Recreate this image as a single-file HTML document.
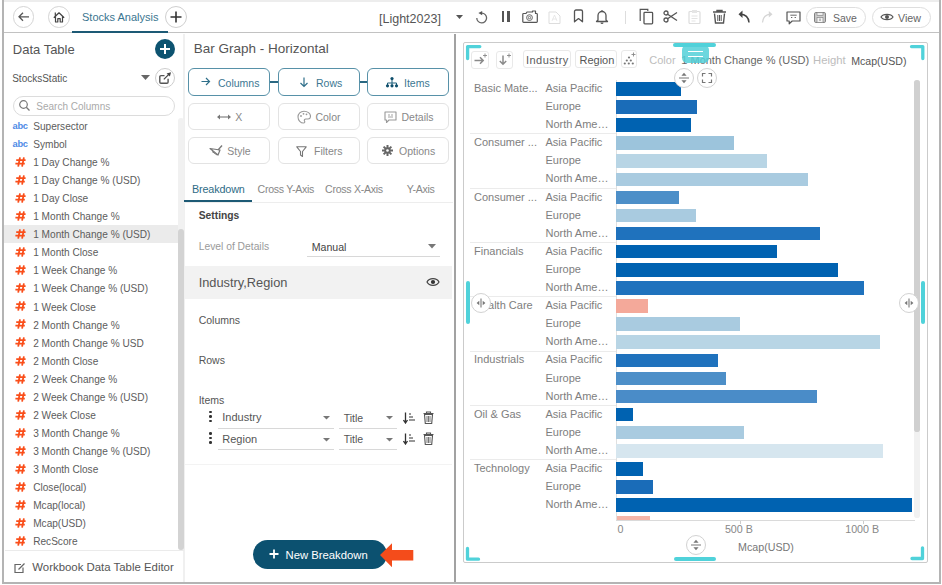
<!DOCTYPE html><html><head><meta charset="utf-8"><style>
html,body{margin:0;padding:0;}
body{width:942px;height:585px;position:relative;overflow:hidden;background:#fff;font-family:"Liberation Sans",sans-serif;}
.t{position:absolute;white-space:nowrap;}
.r{position:absolute;}
</style></head><body>
<div class="r" style="left:4px;top:0px;width:935px;height:2px;background:#ededed"></div>
<div class="r" style="left:2px;top:0px;width:2px;height:584px;background:#b4b4b4"></div>
<div class="r" style="left:939px;top:0px;width:2px;height:584px;background:#b4b4b4"></div>
<div class="r" style="left:2px;top:582px;width:939px;height:2px;background:#b4b4b4"></div>
<div class="r" style="left:4px;top:31.8px;width:935px;height:1.7px;background:#c2c2c2"></div>
<div class="r" style="left:12.8px;top:6.1px;width:21.5px;height:21.5px;border:1px solid #d4d4d4;border-radius:50%;box-sizing:border-box"></div>
<svg class="r" style="left:12.8px;top:6.1px;" width="21.5" height="21.5" viewBox="0 0 21.5 21.5"><path d="M6 10.8h10M10 6.8l-4 4 4 4" fill="none" stroke="#555" stroke-width="1.3"/></svg>
<div class="r" style="left:48px;top:6.1px;width:21.5px;height:21.5px;border:1px solid #d4d4d4;border-radius:50%;box-sizing:border-box"></div>
<svg class="r" style="left:48px;top:6.1px;" width="21.5" height="21.5" viewBox="0 0 21.5 21.5"><path d="M5.8 11.8L11 6.8l5.2 5M7.5 10.3v5.7h2.3v-3.3h2.4V16h2.3v-5.7M7.3 6.5v3.3" fill="none" stroke="#444" stroke-width="1.2" stroke-linejoin="round"/></svg>
<div class="t" style="left:82px;top:11.99px;font-size:11px;line-height:11px;color:#3a7590;font-weight:400;">Stocks Analysis</div>
<div class="r" style="left:72px;top:31px;width:96px;height:2px;background:#1d5a75"></div>
<div class="r" style="left:165px;top:5.5px;width:22px;height:22px;border:1px solid #cfcfcf;border-radius:50%;box-sizing:border-box"></div>
<svg class="r" style="left:165px;top:5.5px;" width="22" height="22" viewBox="0 0 22 22"><path d="M11 5.5v11M5.5 11h11" stroke="#333" stroke-width="1.6"/></svg>
<div class="t" style="left:379px;top:12.62px;font-size:12.5px;line-height:12.5px;color:#555;font-weight:400;">[Light2023]</div>
<svg class="r" style="left:456px;top:15px;" width="7" height="4" viewBox="0 0 7 4"><path d="M0 0h7L3.5 4z" fill="#555"/></svg>
<svg class="r" style="left:474.5px;top:10.5px;" width="13" height="13" viewBox="0 0 13 13"><path d="M6.8 2.1A4.9 4.9 0 1 1 1.8 6.9" fill="none" stroke="#666" stroke-width="1.3"/><path d="M3.4 2.1L7.2 0V4.3z" fill="#555"/></svg>
<div class="r" style="left:501.6px;top:11.2px;width:2.6px;height:10.4px;background:#555"></div>
<div class="r" style="left:507.1px;top:11.2px;width:2.6px;height:10.4px;background:#555"></div>
<svg class="r" style="left:522px;top:10px;" width="16" height="13" viewBox="0 0 16 13"><path d="M1.6 3.5H4l1-1.5h5.5V1h3v2.5h1a0.8 0.8 0 0 1 .8.8V11.5a.8.8 0 0 1-.8.8H1.6a.8.8 0 0 1-.8-.8V4.3a.8.8 0 0 1 .8-.8z" fill="none" stroke="#555" stroke-width="1.2" stroke-linejoin="round"/><circle cx="7.5" cy="7.6" r="2.9" fill="none" stroke="#666" stroke-width="1"/><circle cx="7.5" cy="7.6" r="1.2" fill="none" stroke="#666" stroke-width="0.9"/></svg>
<svg class="r" style="left:548px;top:11px;" width="13" height="13" viewBox="0 0 13 13"><path d="M1 1h7l4 4v7.5H1z" fill="none" stroke="#ddd" stroke-width="1"/><path d="M4 10l2.5-6 2.5 6M4.5 8h4" fill="none" stroke="#e3e3e3" stroke-width="0.8"/></svg>
<svg class="r" style="left:573px;top:9px;" width="11" height="14" viewBox="0 0 11 14"><path d="M1.5 12.8V2.5a1.5 1.5 0 0 1 1.5-1.5h5a1.5 1.5 0 0 1 1.5 1.5v10.3L5.5 9.6z" fill="none" stroke="#555" stroke-width="1.3" stroke-linejoin="round"/></svg>
<svg class="r" style="left:595px;top:9px;" width="14" height="15" viewBox="0 0 14 15"><path d="M3 11V6.5a4 4 0 0 1 8 0V11l1.5 1.5h-11z" fill="none" stroke="#555" stroke-width="1.3" stroke-linejoin="round"/><path d="M5.5 13.5a1.5 1.5 0 0 0 3 0" fill="#555"/><rect x="6.3" y="1.2" width="1.4" height="1.5" fill="#555"/></svg>
<div class="r" style="left:625px;top:11px;width:1px;height:13px;background:#ddd"></div>
<svg class="r" style="left:638px;top:8px;" width="16" height="17" viewBox="0 0 16 17"><path d="M2.2 13V1.3H9.8V3" fill="none" stroke="#555" stroke-width="1.2"/><rect x="6" y="4.4" width="8.6" height="11.4" rx="0.8" fill="none" stroke="#555" stroke-width="1.3"/></svg>
<svg class="r" style="left:663px;top:10px;" width="15" height="13" viewBox="0 0 15 13"><circle cx="3" cy="3" r="2" fill="none" stroke="#555" stroke-width="1.3"/><circle cx="3" cy="10" r="2" fill="none" stroke="#555" stroke-width="1.3"/><path d="M4.6 4.2L14 10.5M4.6 8.8L14 2.5" stroke="#555" stroke-width="1.3"/></svg>
<svg class="r" style="left:688px;top:9px;" width="13" height="15" viewBox="0 0 13 15"><rect x="1" y="2.5" width="11" height="12" rx="1" fill="none" stroke="#ddd" stroke-width="1.2"/><rect x="4" y="1" width="5" height="3" fill="#e5e5e5"/><path d="M3.5 7h6M3.5 9.5h6M3.5 12h4" stroke="#e3e3e3" stroke-width="1"/></svg>
<svg class="r" style="left:712px;top:9px;" width="15" height="15" viewBox="0 0 15 15"><path d="M1 3h13M5 3V1.5h5V3" fill="none" stroke="#555" stroke-width="1.4"/><path d="M2.5 4.5l1 9.5h8l1-9.5" fill="none" stroke="#555" stroke-width="1.4"/><path d="M5.8 6v6M7.5 6v6M9.2 6v6" stroke="#555" stroke-width="1"/></svg>
<svg class="r" style="left:738px;top:10px;" width="12" height="13" viewBox="0 0 12 13"><path d="M11 12.5C10.5 6 7 4.2 2 4.2" fill="none" stroke="#444" stroke-width="1.5"/><path d="M0.5 4.2L4.5 0.5V8z" fill="#444"/></svg>
<svg class="r" style="left:761px;top:10px;" width="12" height="13" viewBox="0 0 12 13"><path d="M1.5 12.5C2 6.5 5 4.5 9.5 4.2" fill="none" stroke="#d5d5d5" stroke-width="1.2"/><path d="M11.5 4.2L7.8 1V7.5z" fill="#d5d5d5"/></svg>
<svg class="r" style="left:785.5px;top:10.5px;" width="15" height="14" viewBox="0 0 15 14"><path d="M1 1h13v9H6.2L3.2 12.8V10H1z" fill="none" stroke="#555" stroke-width="1.2" stroke-linejoin="round"/><path d="M4.3 4.2h6.4" stroke="#777" stroke-width="1.1"/><path d="M5 6.5h1.3M8.6 6.5h1.3" stroke="#666" stroke-width="1.2"/></svg>
<div class="r" style="left:805.5px;top:6.5px;width:60.5px;height:21px;border:1px solid #dedede;border-radius:11px;box-sizing:border-box"></div>
<svg class="r" style="left:814px;top:12px;" width="12" height="11" viewBox="0 0 12 11"><rect x="0.6" y="0.6" width="10.8" height="9.8" rx="1" fill="#cfcfcf" stroke="#777" stroke-width="1"/><rect x="3" y="0.6" width="6" height="3" fill="#eee" stroke="#888" stroke-width="0.7"/><rect x="3" y="5.5" width="6" height="4.9" fill="#f4f4f4" stroke="#888" stroke-width="0.7"/><path d="M6 6.5v2.5" stroke="#777" stroke-width="0.9"/></svg>
<div class="t" style="left:833px;top:13.11px;font-size:10.5px;line-height:10.5px;color:#666;font-weight:400;">Save</div>
<div class="r" style="left:872px;top:6.5px;width:59px;height:21px;border:1px solid #dedede;border-radius:11px;box-sizing:border-box"></div>
<svg class="r" style="left:880px;top:12px;" width="14" height="10" viewBox="0 0 14 10"><path d="M1 5C3 1.5 11 1.5 13 5C11 8.5 3 8.5 1 5z" fill="none" stroke="#555" stroke-width="1.2"/><circle cx="7" cy="5" r="2" fill="#555"/></svg>
<div class="t" style="left:898px;top:12.94px;font-size:10.7px;line-height:10.7px;color:#666;font-weight:400;">View</div>
<div class="r" style="left:183px;top:34px;width:2px;height:548px;background:#f0f0f0"></div>
<div class="t" style="left:12.8px;top:43.19px;font-size:13px;line-height:13px;color:#555;font-weight:400;">Data Table</div>
<div class="r" style="left:154.8px;top:39px;width:20px;height:20px;background:#0d5370;border-radius:50%"></div>
<svg class="r" style="left:154.8px;top:39px;" width="20" height="20" viewBox="0 0 20 20"><path d="M10 5v10M5 10h10" stroke="#fff" stroke-width="2"/></svg>
<div class="t" style="left:12.2px;top:74.03px;font-size:10px;line-height:10px;color:#555;font-weight:400;">StocksStatic</div>
<svg class="r" style="left:141px;top:75px;" width="9" height="5" viewBox="0 0 9 5"><path d="M0 0h9L4.5 5z" fill="#666"/></svg>
<div class="r" style="left:154.5px;top:67.5px;width:20.5px;height:20.5px;border:1.2px solid #cdcdcd;border-radius:50%;box-sizing:border-box"></div>
<svg class="r" style="left:154.5px;top:67.5px;" width="20.5" height="20.5" viewBox="0 0 20.5 20.5"><path d="M9.5 7.6H6a1.2 1.2 0 0 0-1.2 1.2v5.3a1.2 1.2 0 0 0 1.2 1.2h5.9a1.2 1.2 0 0 0 1.2-1.2V10.8" fill="none" stroke="#555" stroke-width="1.4"/><path d="M8.8 11.4L14.8 5.4" stroke="#444" stroke-width="1.2"/><path d="M16 4.3L11.6 5.4 14.9 8.6z" fill="#444"/></svg>
<div class="r" style="left:12.8px;top:96px;width:162px;height:19.5px;border:1px solid #dcdcdc;border-radius:10px;box-sizing:border-box"></div>
<svg class="r" style="left:18px;top:99px;" width="13" height="13" viewBox="0 0 13 13"><circle cx="5.5" cy="5.5" r="3.8" fill="none" stroke="#777" stroke-width="1.2"/><path d="M8.3 8.3L11.5 11.5" stroke="#777" stroke-width="1.3"/></svg>
<div class="t" style="left:36.3px;top:101.93px;font-size:10px;line-height:10px;color:#aaa;font-weight:400;">Search Columns</div>
<div class="r" style="left:177.5px;top:118px;width:6.5px;height:432px;background:#f1f1f1;border-radius:3px"></div>
<div class="r" style="left:177.9px;top:228.7px;width:6px;height:321.3px;background:#d3d3d3;border-radius:3px"></div>
<div class="t" style="left:12.6px;top:121.93px;font-size:9.3px;line-height:9.3px;color:#4f8be6;font-weight:700;letter-spacing:-0.35px">abc</div>
<div class="t" style="left:33.2px;top:121.85px;font-size:10.1px;line-height:10.1px;color:#5c5c5c;font-weight:400;">Supersector</div>
<div class="t" style="left:12.6px;top:140.00px;font-size:9.3px;line-height:9.3px;color:#4f8be6;font-weight:700;letter-spacing:-0.35px">abc</div>
<div class="t" style="left:33.2px;top:139.92px;font-size:10.1px;line-height:10.1px;color:#5c5c5c;font-weight:400;">Symbol</div>
<svg class="r" style="left:14.5px;top:156.74px;" width="11" height="10" viewBox="0 0 11 10"><path d="M5 0.3L3.2 9.7M8.9 0.3L7.1 9.7M1.2 3.1H10.6M0.4 6.7H9.8" stroke="#fa4e1a" stroke-width="1.8"/></svg>
<div class="t" style="left:33.2px;top:157.99px;font-size:10.1px;line-height:10.1px;color:#5c5c5c;font-weight:400;">1 Day Change %</div>
<svg class="r" style="left:14.5px;top:174.81px;" width="11" height="10" viewBox="0 0 11 10"><path d="M5 0.3L3.2 9.7M8.9 0.3L7.1 9.7M1.2 3.1H10.6M0.4 6.7H9.8" stroke="#fa4e1a" stroke-width="1.8"/></svg>
<div class="t" style="left:33.2px;top:176.06px;font-size:10.1px;line-height:10.1px;color:#5c5c5c;font-weight:400;">1 Day Change % (USD)</div>
<svg class="r" style="left:14.5px;top:192.88px;" width="11" height="10" viewBox="0 0 11 10"><path d="M5 0.3L3.2 9.7M8.9 0.3L7.1 9.7M1.2 3.1H10.6M0.4 6.7H9.8" stroke="#fa4e1a" stroke-width="1.8"/></svg>
<div class="t" style="left:33.2px;top:194.13px;font-size:10.1px;line-height:10.1px;color:#5c5c5c;font-weight:400;">1 Day Close</div>
<svg class="r" style="left:14.5px;top:210.95px;" width="11" height="10" viewBox="0 0 11 10"><path d="M5 0.3L3.2 9.7M8.9 0.3L7.1 9.7M1.2 3.1H10.6M0.4 6.7H9.8" stroke="#fa4e1a" stroke-width="1.8"/></svg>
<div class="t" style="left:33.2px;top:212.20px;font-size:10.1px;line-height:10.1px;color:#5c5c5c;font-weight:400;">1 Month Change %</div>
<div class="r" style="left:4.3px;top:225.2px;width:173.4px;height:17.7px;background:#ebebeb"></div>
<svg class="r" style="left:14.5px;top:229.02px;" width="11" height="10" viewBox="0 0 11 10"><path d="M5 0.3L3.2 9.7M8.9 0.3L7.1 9.7M1.2 3.1H10.6M0.4 6.7H9.8" stroke="#fa4e1a" stroke-width="1.8"/></svg>
<div class="t" style="left:33.2px;top:230.27px;font-size:10.1px;line-height:10.1px;color:#5c5c5c;font-weight:400;">1 Month Change % (USD)</div>
<svg class="r" style="left:14.5px;top:247.09px;" width="11" height="10" viewBox="0 0 11 10"><path d="M5 0.3L3.2 9.7M8.9 0.3L7.1 9.7M1.2 3.1H10.6M0.4 6.7H9.8" stroke="#fa4e1a" stroke-width="1.8"/></svg>
<div class="t" style="left:33.2px;top:248.34px;font-size:10.1px;line-height:10.1px;color:#5c5c5c;font-weight:400;">1 Month Close</div>
<svg class="r" style="left:14.5px;top:265.16px;" width="11" height="10" viewBox="0 0 11 10"><path d="M5 0.3L3.2 9.7M8.9 0.3L7.1 9.7M1.2 3.1H10.6M0.4 6.7H9.8" stroke="#fa4e1a" stroke-width="1.8"/></svg>
<div class="t" style="left:33.2px;top:266.41px;font-size:10.1px;line-height:10.1px;color:#5c5c5c;font-weight:400;">1 Week Change %</div>
<svg class="r" style="left:14.5px;top:283.23px;" width="11" height="10" viewBox="0 0 11 10"><path d="M5 0.3L3.2 9.7M8.9 0.3L7.1 9.7M1.2 3.1H10.6M0.4 6.7H9.8" stroke="#fa4e1a" stroke-width="1.8"/></svg>
<div class="t" style="left:33.2px;top:284.48px;font-size:10.1px;line-height:10.1px;color:#5c5c5c;font-weight:400;">1 Week Change % (USD)</div>
<svg class="r" style="left:14.5px;top:301.3px;" width="11" height="10" viewBox="0 0 11 10"><path d="M5 0.3L3.2 9.7M8.9 0.3L7.1 9.7M1.2 3.1H10.6M0.4 6.7H9.8" stroke="#fa4e1a" stroke-width="1.8"/></svg>
<div class="t" style="left:33.2px;top:302.55px;font-size:10.1px;line-height:10.1px;color:#5c5c5c;font-weight:400;">1 Week Close</div>
<svg class="r" style="left:14.5px;top:319.37px;" width="11" height="10" viewBox="0 0 11 10"><path d="M5 0.3L3.2 9.7M8.9 0.3L7.1 9.7M1.2 3.1H10.6M0.4 6.7H9.8" stroke="#fa4e1a" stroke-width="1.8"/></svg>
<div class="t" style="left:33.2px;top:320.62px;font-size:10.1px;line-height:10.1px;color:#5c5c5c;font-weight:400;">2 Month Change %</div>
<svg class="r" style="left:14.5px;top:337.44px;" width="11" height="10" viewBox="0 0 11 10"><path d="M5 0.3L3.2 9.7M8.9 0.3L7.1 9.7M1.2 3.1H10.6M0.4 6.7H9.8" stroke="#fa4e1a" stroke-width="1.8"/></svg>
<div class="t" style="left:33.2px;top:338.69px;font-size:10.1px;line-height:10.1px;color:#5c5c5c;font-weight:400;">2 Month Change % USD</div>
<svg class="r" style="left:14.5px;top:355.51px;" width="11" height="10" viewBox="0 0 11 10"><path d="M5 0.3L3.2 9.7M8.9 0.3L7.1 9.7M1.2 3.1H10.6M0.4 6.7H9.8" stroke="#fa4e1a" stroke-width="1.8"/></svg>
<div class="t" style="left:33.2px;top:356.76px;font-size:10.1px;line-height:10.1px;color:#5c5c5c;font-weight:400;">2 Month Close</div>
<svg class="r" style="left:14.5px;top:373.58px;" width="11" height="10" viewBox="0 0 11 10"><path d="M5 0.3L3.2 9.7M8.9 0.3L7.1 9.7M1.2 3.1H10.6M0.4 6.7H9.8" stroke="#fa4e1a" stroke-width="1.8"/></svg>
<div class="t" style="left:33.2px;top:374.83px;font-size:10.1px;line-height:10.1px;color:#5c5c5c;font-weight:400;">2 Week Change %</div>
<svg class="r" style="left:14.5px;top:391.65px;" width="11" height="10" viewBox="0 0 11 10"><path d="M5 0.3L3.2 9.7M8.9 0.3L7.1 9.7M1.2 3.1H10.6M0.4 6.7H9.8" stroke="#fa4e1a" stroke-width="1.8"/></svg>
<div class="t" style="left:33.2px;top:392.90px;font-size:10.1px;line-height:10.1px;color:#5c5c5c;font-weight:400;">2 Week Change % (USD)</div>
<svg class="r" style="left:14.5px;top:409.72px;" width="11" height="10" viewBox="0 0 11 10"><path d="M5 0.3L3.2 9.7M8.9 0.3L7.1 9.7M1.2 3.1H10.6M0.4 6.7H9.8" stroke="#fa4e1a" stroke-width="1.8"/></svg>
<div class="t" style="left:33.2px;top:410.97px;font-size:10.1px;line-height:10.1px;color:#5c5c5c;font-weight:400;">2 Week Close</div>
<svg class="r" style="left:14.5px;top:427.79px;" width="11" height="10" viewBox="0 0 11 10"><path d="M5 0.3L3.2 9.7M8.9 0.3L7.1 9.7M1.2 3.1H10.6M0.4 6.7H9.8" stroke="#fa4e1a" stroke-width="1.8"/></svg>
<div class="t" style="left:33.2px;top:429.04px;font-size:10.1px;line-height:10.1px;color:#5c5c5c;font-weight:400;">3 Month Change %</div>
<svg class="r" style="left:14.5px;top:445.86px;" width="11" height="10" viewBox="0 0 11 10"><path d="M5 0.3L3.2 9.7M8.9 0.3L7.1 9.7M1.2 3.1H10.6M0.4 6.7H9.8" stroke="#fa4e1a" stroke-width="1.8"/></svg>
<div class="t" style="left:33.2px;top:447.11px;font-size:10.1px;line-height:10.1px;color:#5c5c5c;font-weight:400;">3 Month Change % (USD)</div>
<svg class="r" style="left:14.5px;top:463.93px;" width="11" height="10" viewBox="0 0 11 10"><path d="M5 0.3L3.2 9.7M8.9 0.3L7.1 9.7M1.2 3.1H10.6M0.4 6.7H9.8" stroke="#fa4e1a" stroke-width="1.8"/></svg>
<div class="t" style="left:33.2px;top:465.18px;font-size:10.1px;line-height:10.1px;color:#5c5c5c;font-weight:400;">3 Month Close</div>
<svg class="r" style="left:14.5px;top:482.0px;" width="11" height="10" viewBox="0 0 11 10"><path d="M5 0.3L3.2 9.7M8.9 0.3L7.1 9.7M1.2 3.1H10.6M0.4 6.7H9.8" stroke="#fa4e1a" stroke-width="1.8"/></svg>
<div class="t" style="left:33.2px;top:483.25px;font-size:10.1px;line-height:10.1px;color:#5c5c5c;font-weight:400;">Close(local)</div>
<svg class="r" style="left:14.5px;top:500.07px;" width="11" height="10" viewBox="0 0 11 10"><path d="M5 0.3L3.2 9.7M8.9 0.3L7.1 9.7M1.2 3.1H10.6M0.4 6.7H9.8" stroke="#fa4e1a" stroke-width="1.8"/></svg>
<div class="t" style="left:33.2px;top:501.32px;font-size:10.1px;line-height:10.1px;color:#5c5c5c;font-weight:400;">Mcap(local)</div>
<svg class="r" style="left:14.5px;top:518.14px;" width="11" height="10" viewBox="0 0 11 10"><path d="M5 0.3L3.2 9.7M8.9 0.3L7.1 9.7M1.2 3.1H10.6M0.4 6.7H9.8" stroke="#fa4e1a" stroke-width="1.8"/></svg>
<div class="t" style="left:33.2px;top:519.39px;font-size:10.1px;line-height:10.1px;color:#5c5c5c;font-weight:400;">Mcap(USD)</div>
<svg class="r" style="left:14.5px;top:536.21px;" width="11" height="10" viewBox="0 0 11 10"><path d="M5 0.3L3.2 9.7M8.9 0.3L7.1 9.7M1.2 3.1H10.6M0.4 6.7H9.8" stroke="#fa4e1a" stroke-width="1.8"/></svg>
<div class="t" style="left:33.2px;top:537.46px;font-size:10.1px;line-height:10.1px;color:#5c5c5c;font-weight:400;">RecScore</div>
<div class="r" style="left:5px;top:550.3px;width:179px;height:1px;background:#ebebeb"></div>
<svg class="r" style="left:14px;top:563px;" width="12" height="10" viewBox="0 0 12 10"><path d="M7 1.5H1v8h8V4.5" fill="none" stroke="#666" stroke-width="1.2"/><path d="M4.5 6.5L10.5 0.5" stroke="#666" stroke-width="1.3"/></svg>
<div class="t" style="left:32.3px;top:561.75px;font-size:11.4px;line-height:11.4px;color:#555;font-weight:400;">Workbook Data Table Editor</div>
<div class="r" style="left:454.2px;top:34px;width:1.6px;height:548px;background:#a2a2a2"></div>
<div class="t" style="left:193.7px;top:41.77px;font-size:13.5px;line-height:13.5px;color:#555;font-weight:400;">Bar Graph - Horizontal</div>
<div class="r" style="left:270px;top:81.2px;width:8px;height:2px;background:#2a6882"></div>
<div class="r" style="left:359.8px;top:81.2px;width:8px;height:2px;background:#2a6882"></div>
<div class="r" style="left:188.2px;top:68.4px;width:82px;height:27.4px;border:1.8px solid #5791a8;border-radius:6px;box-sizing:border-box;background:#fff"></div>
<div class="r" style="left:188.2px;top:103px;width:82px;height:27px;border:1px solid #e3e3e3;border-radius:6px;box-sizing:border-box"></div>
<div class="r" style="left:188.2px;top:137.3px;width:82px;height:27px;border:1px solid #e3e3e3;border-radius:6px;box-sizing:border-box"></div>
<div class="r" style="left:277.7px;top:68.4px;width:82px;height:27.4px;border:1.8px solid #5791a8;border-radius:6px;box-sizing:border-box;background:#fff"></div>
<div class="r" style="left:277.7px;top:103px;width:82px;height:27px;border:1px solid #e3e3e3;border-radius:6px;box-sizing:border-box"></div>
<div class="r" style="left:277.7px;top:137.3px;width:82px;height:27px;border:1px solid #e3e3e3;border-radius:6px;box-sizing:border-box"></div>
<div class="r" style="left:367px;top:68.4px;width:82px;height:27.4px;border:1.8px solid #5791a8;border-radius:6px;box-sizing:border-box;background:#fff"></div>
<div class="r" style="left:367px;top:103px;width:82px;height:27px;border:1px solid #e3e3e3;border-radius:6px;box-sizing:border-box"></div>
<div class="r" style="left:367px;top:137.3px;width:82px;height:27px;border:1px solid #e3e3e3;border-radius:6px;box-sizing:border-box"></div>
<svg class="r" style="left:201px;top:77px;" width="10" height="9" viewBox="0 0 10 9"><path d="M0.5 4.5h8M5 1l3.5 3.5L5 8" fill="none" stroke="#2f6f8a" stroke-width="1.2"/></svg>
<div class="t" style="left:218px;top:78.11px;font-size:10.5px;line-height:10.5px;color:#3c7792;font-weight:400;">Columns</div>
<svg class="r" style="left:299px;top:77px;" width="10" height="11" viewBox="0 0 10 11"><path d="M5 0.5v9M1.5 6L5 9.5 8.5 6" fill="none" stroke="#2f6f8a" stroke-width="1.2"/></svg>
<div class="t" style="left:316px;top:78.11px;font-size:10.5px;line-height:10.5px;color:#3c7792;font-weight:400;">Rows</div>
<svg class="r" style="left:385px;top:76px;" width="14" height="12" viewBox="0 0 14 12"><path d="M7 3v6M2.5 9.5V7h9v2.5" fill="none" stroke="#1f5f7a" stroke-width="1"/><circle cx="7" cy="2.6" r="1.6" fill="#0f4f6c"/><circle cx="2.5" cy="9.8" r="1.6" fill="#0f4f6c"/><circle cx="7" cy="9.8" r="1.6" fill="#0f4f6c"/><circle cx="11.5" cy="9.8" r="1.6" fill="#0f4f6c"/></svg>
<div class="t" style="left:404px;top:78.11px;font-size:10.5px;line-height:10.5px;color:#3c7792;font-weight:400;">Items</div>
<svg class="r" style="left:217px;top:114px;" width="14" height="6" viewBox="0 0 14 6"><path d="M1 3h12" stroke="#777" stroke-width="1.1"/><path d="M0 3l3-2.5v5zM14 3l-3-2.5v5z" fill="#777"/></svg>
<div class="t" style="left:235.2px;top:111.71px;font-size:10.5px;line-height:10.5px;color:#888;font-weight:400;">X</div>
<svg class="r" style="left:296.5px;top:110px;" width="14" height="14" viewBox="0 0 14 14"><path d="M7 1.2C3.5 1.2 1 3.8 1 7c0 3.5 2.8 6 5.5 6 1.3 0 1.5-1 1-2-.6-1.2.2-2 1.3-2H11c1.5 0 2.5-1 2.5-2.8C13.5 3.5 10.5 1.2 7 1.2z" fill="none" stroke="#999" stroke-width="1.1"/><circle cx="4" cy="6" r="0.9" fill="#999"/><circle cx="6.5" cy="3.8" r="0.9" fill="#999"/><circle cx="9.5" cy="4.3" r="0.9" fill="#999"/></svg>
<div class="t" style="left:315.4px;top:111.61px;font-size:10.5px;line-height:10.5px;color:#888;font-weight:400;">Color</div>
<svg class="r" style="left:383.5px;top:111px;" width="13" height="13" viewBox="0 0 13 13"><path d="M1 1h11v8H5l-2.5 2.5V9H1z" fill="none" stroke="#999" stroke-width="1.1" stroke-linejoin="round"/><path d="M4 4h2M7 4h2M4 6h5" stroke="#999" stroke-width="0.9"/></svg>
<div class="t" style="left:401.5px;top:111.61px;font-size:10.5px;line-height:10.5px;color:#888;font-weight:400;">Details</div>
<svg class="r" style="left:209px;top:145px;" width="14" height="11" viewBox="0 0 14 11"><path d="M1 3.5l8 6.5 2-5z" fill="none" stroke="#777" stroke-width="1.2" stroke-linejoin="round"/><path d="M9 5l4-4.5" stroke="#777" stroke-width="1.3"/><path d="M3 6.5l5 3.5" stroke="#777" stroke-width="1"/></svg>
<div class="t" style="left:227.3px;top:146.31px;font-size:10.5px;line-height:10.5px;color:#888;font-weight:400;">Style</div>
<svg class="r" style="left:296px;top:145.5px;" width="11" height="11" viewBox="0 0 11 11"><path d="M0.8 0.8h9.4L6.5 5.5v5L4.5 9V5.5z" fill="none" stroke="#777" stroke-width="1.1" stroke-linejoin="round"/></svg>
<div class="t" style="left:314px;top:146.31px;font-size:10.5px;line-height:10.5px;color:#888;font-weight:400;">Filters</div>
<svg class="r" style="left:381.5px;top:145px;" width="11" height="11" viewBox="0 0 11 11"><g transform="translate(5.5 5.5)" fill="#666"><circle r="3.2"/><g id="g"><rect x="-1" y="-5.5" width="2" height="11"/></g><rect x="-1" y="-5.5" width="2" height="11" transform="rotate(45)"/><rect x="-1" y="-5.5" width="2" height="11" transform="rotate(90)"/><rect x="-1" y="-5.5" width="2" height="11" transform="rotate(135)"/><circle r="1.3" fill="#fff"/></g></svg>
<div class="t" style="left:399px;top:146.31px;font-size:10.5px;line-height:10.5px;color:#888;font-weight:400;">Options</div>
<div class="t" style="left:192px;top:184.06px;font-size:10.8px;line-height:10.8px;color:#2f6c86;font-weight:400;letter-spacing:-0.15px">Breakdown</div>
<div class="t" style="left:257.6px;top:183.72px;font-size:10.6px;line-height:10.6px;color:#888;font-weight:400;letter-spacing:-0.3px">Cross Y-Axis</div>
<div class="t" style="left:325.1px;top:183.72px;font-size:10.6px;line-height:10.6px;color:#888;font-weight:400;letter-spacing:-0.3px">Cross X-Axis</div>
<div class="t" style="left:406.7px;top:183.72px;font-size:10.6px;line-height:10.6px;color:#888;font-weight:400;letter-spacing:-0.3px">Y-Axis</div>
<div class="r" style="left:184.5px;top:202.3px;width:268px;height:1px;background:#ededed"></div>
<div class="r" style="left:184.4px;top:200px;width:68px;height:2.4px;background:#1d5a75"></div>
<div class="t" style="left:198.7px;top:210.78px;font-size:10.3px;line-height:10.3px;color:#444;font-weight:700;">Settings</div>
<div class="t" style="left:198.7px;top:242.08px;font-size:10.3px;line-height:10.3px;color:#9a9a9a;font-weight:400;">Level of Details</div>
<div class="t" style="left:311.7px;top:241.82px;font-size:10.6px;line-height:10.6px;color:#444;font-weight:400;">Manual</div>
<div class="r" style="left:307px;top:256px;width:133px;height:1px;background:#d8d8d8"></div>
<svg class="r" style="left:428px;top:244px;" width="8" height="5" viewBox="0 0 8 5"><path d="M0 0h8L4 4.5z" fill="#777"/></svg>
<div class="r" style="left:184.5px;top:266.3px;width:267.5px;height:32.7px;background:#f2f2f2"></div>
<div class="t" style="left:198.7px;top:276.86px;font-size:12.8px;line-height:12.8px;color:#555;font-weight:400;">Industry,Region</div>
<svg class="r" style="left:425.5px;top:277px;" width="14" height="10" viewBox="0 0 14 10"><path d="M1 5C3.2 0.6 10.8 0.6 13 5 10.8 9.4 3.2 9.4 1 5z" fill="none" stroke="#444" stroke-width="1.2"/><circle cx="7" cy="5" r="2.1" fill="#333"/></svg>
<div class="t" style="left:198.7px;top:315.31px;font-size:10.5px;line-height:10.5px;color:#555;font-weight:400;">Columns</div>
<div class="t" style="left:198.7px;top:355.41px;font-size:10.5px;line-height:10.5px;color:#555;font-weight:400;">Rows</div>
<div class="t" style="left:198.7px;top:394.91px;font-size:10.5px;line-height:10.5px;color:#555;font-weight:400;">Items</div>
<div class="r" style="left:209.3px;top:410.9px;width:2.6px;height:2.6px;background:#333;border-radius:50%"></div>
<div class="r" style="left:209.3px;top:415.4px;width:2.6px;height:2.6px;background:#333;border-radius:50%"></div>
<div class="r" style="left:209.3px;top:419.9px;width:2.6px;height:2.6px;background:#333;border-radius:50%"></div>
<div class="t" style="left:222.3px;top:412.39px;font-size:11px;line-height:11px;color:#555;font-weight:400;">Industry</div>
<div class="r" style="left:217.6px;top:427.8px;width:116.4px;height:1px;background:#d8d8d8"></div>
<svg class="r" style="left:323px;top:416.2px;" width="7" height="4" viewBox="0 0 7 4"><path d="M0 0h7L3.5 3.5z" fill="#777"/></svg>
<div class="t" style="left:343.7px;top:412.81px;font-size:10.5px;line-height:10.5px;color:#555;font-weight:400;">Title</div>
<div class="r" style="left:339px;top:427.8px;width:58px;height:1px;background:#d8d8d8"></div>
<svg class="r" style="left:386px;top:416.2px;" width="7" height="4" viewBox="0 0 7 4"><path d="M0 0h7L3.5 3.5z" fill="#777"/></svg>
<svg class="r" style="left:403px;top:411.7px;" width="13" height="12" viewBox="0 0 13 12"><path d="M2.5 0.5v10M0.5 8l2 3 2-3" fill="none" stroke="#333" stroke-width="1.3"/><path d="M6 2h2M6 5h4M6 8h6" stroke="#333" stroke-width="1.2"/></svg>
<svg class="r" style="left:423px;top:410.7px;" width="11" height="13" viewBox="0 0 11 13"><path d="M0.5 2.5h10M3.5 2.5V1h4v1.5" fill="none" stroke="#555" stroke-width="1.1"/><path d="M1.5 3.5l.8 9h6.4l.8-9z" fill="none" stroke="#555" stroke-width="1.1"/><path d="M4 5v6M5.5 5v6M7 5v6" stroke="#555" stroke-width="0.8"/></svg>
<div class="r" style="left:209.3px;top:432.2px;width:2.6px;height:2.6px;background:#333;border-radius:50%"></div>
<div class="r" style="left:209.3px;top:436.7px;width:2.6px;height:2.6px;background:#333;border-radius:50%"></div>
<div class="r" style="left:209.3px;top:441.2px;width:2.6px;height:2.6px;background:#333;border-radius:50%"></div>
<div class="t" style="left:222.3px;top:433.69px;font-size:11px;line-height:11px;color:#555;font-weight:400;">Region</div>
<div class="r" style="left:217.6px;top:449px;width:116.4px;height:1px;background:#d8d8d8"></div>
<svg class="r" style="left:323px;top:437.5px;" width="7" height="4" viewBox="0 0 7 4"><path d="M0 0h7L3.5 3.5z" fill="#777"/></svg>
<div class="t" style="left:343.7px;top:434.11px;font-size:10.5px;line-height:10.5px;color:#555;font-weight:400;">Title</div>
<div class="r" style="left:339px;top:449px;width:58px;height:1px;background:#d8d8d8"></div>
<svg class="r" style="left:386px;top:437.5px;" width="7" height="4" viewBox="0 0 7 4"><path d="M0 0h7L3.5 3.5z" fill="#777"/></svg>
<svg class="r" style="left:403px;top:433px;" width="13" height="12" viewBox="0 0 13 12"><path d="M2.5 0.5v10M0.5 8l2 3 2-3" fill="none" stroke="#333" stroke-width="1.3"/><path d="M6 2h2M6 5h4M6 8h6" stroke="#333" stroke-width="1.2"/></svg>
<svg class="r" style="left:423px;top:432px;" width="11" height="13" viewBox="0 0 11 13"><path d="M0.5 2.5h10M3.5 2.5V1h4v1.5" fill="none" stroke="#555" stroke-width="1.1"/><path d="M1.5 3.5l.8 9h6.4l.8-9z" fill="none" stroke="#555" stroke-width="1.1"/><path d="M4 5v6M5.5 5v6M7 5v6" stroke="#555" stroke-width="0.8"/></svg>
<div class="r" style="left:184.5px;top:463.5px;width:267.5px;height:1px;background:#f3f3f3"></div>
<div class="r" style="left:252.8px;top:539.8px;width:134px;height:29px;background:#0c5170;border-radius:15px"></div>
<svg class="r" style="left:268.5px;top:549px;" width="10" height="10" viewBox="0 0 10 10"><path d="M5 0.5v9M0.5 5h9" stroke="#fff" stroke-width="1.8"/></svg>
<div class="t" style="left:285.5px;top:549.63px;font-size:11.3px;line-height:11.3px;color:#fff;font-weight:400;">New Breakdown</div>
<svg class="r" style="left:379px;top:543px;" width="35" height="25" viewBox="0 0 35 25"><path d="M1 12L13 0.3V7H34.3V17.5H13V24.2z" fill="#f44c1b"/></svg>
<div class="r" style="left:463px;top:42.3px;width:464.5px;height:520.8px;border:1.2px solid #cbcbcb;border-radius:2px;box-sizing:border-box"></div>
<div class="r" style="left:470.5px;top:51px;width:18px;height:17.5px;border:1px solid #e9e9e9;border-radius:3px;box-sizing:border-box"></div>
<svg class="r" style="left:470.5px;top:51px;" width="18" height="17.5" viewBox="0 0 18 17.5"><path d="M3.5 9.5h8.5M9 6.3l3.2 3.2L9 12.7" fill="none" stroke="#8a8a8a" stroke-width="1.5"/><path d="M14 2.5v4M12 4.5h4" stroke="#888" stroke-width="0.9"/></svg>
<div class="r" style="left:495.6px;top:51px;width:17.5px;height:17.5px;border:1px solid #e9e9e9;border-radius:3px;box-sizing:border-box"></div>
<svg class="r" style="left:495.6px;top:51px;" width="17.5" height="17.5" viewBox="0 0 17.5 17.5"><path d="M7 4.5v8.5M3.8 10l3.2 3.2 3.2-3.2" fill="none" stroke="#8a8a8a" stroke-width="1.5"/><path d="M13 2.5v4M11 4.5h4" stroke="#888" stroke-width="0.9"/></svg>
<div class="r" style="left:522.7px;top:49.8px;width:48.5px;height:18.7px;border:1px solid #e9e9e9;border-radius:3px;box-sizing:border-box"></div>
<div class="t" style="left:526px;top:55.19px;font-size:11px;line-height:11px;color:#5a5a5a;font-weight:400;letter-spacing:0.45px">Industry</div>
<div class="r" style="left:575.3px;top:49.8px;width:42px;height:18.7px;border:1px solid #e9e9e9;border-radius:3px;box-sizing:border-box"></div>
<div class="t" style="left:579.5px;top:55.19px;font-size:11px;line-height:11px;color:#555;font-weight:400;">Region</div>
<div class="r" style="left:620.6px;top:49.8px;width:16.5px;height:18.7px;border:1px solid #e9e9e9;border-radius:3px;box-sizing:border-box"></div>
<svg class="r" style="left:620.6px;top:49.8px;" width="16.5" height="18.7" viewBox="0 0 16.5 18.7"><g fill="#777"><circle cx="8" cy="7.5" r="1.1"/><circle cx="5.8" cy="10.5" r="1.1"/><circle cx="9.8" cy="10.5" r="1.1"/><circle cx="3.8" cy="13.5" r="1.1"/><circle cx="7.8" cy="13.5" r="1.1"/><circle cx="11.8" cy="13.5" r="1.1"/></g><path d="M12.5 2.5v4M10.5 4.5h4" stroke="#888" stroke-width="0.9"/></svg>
<div class="t" style="left:649.3px;top:55.19px;font-size:11px;line-height:11px;color:#bdbdbd;font-weight:400;">Color</div>
<div class="t" style="left:681.3px;top:55.19px;font-size:11px;line-height:11px;color:#666;font-weight:400;">1 Month Change % (USD)</div>
<div class="t" style="left:813px;top:54.93px;font-size:11.3px;line-height:11.3px;color:#bdbdbd;font-weight:400;">Height</div>
<div class="t" style="left:851.2px;top:55.52px;font-size:10.6px;line-height:10.6px;color:#555;font-weight:400;">Mcap(USD)</div>
<div class="r" style="left:616px;top:79.5px;width:1px;height:440px;background:#e0e0e0"></div>
<div class="t" style="left:474px;top:82.99px;font-size:11px;line-height:11px;color:#7e7e7e;font-weight:400;">Basic Mate...</div>
<div class="t" style="left:545.5px;top:82.99px;font-size:11px;line-height:11px;color:#7e7e7e;font-weight:400;">Asia Pacific</div>
<div class="r" style="left:616px;top:82.0px;width:65.2px;height:13.6px;background:#0062b1"></div>
<div class="t" style="left:545.5px;top:101.09px;font-size:11px;line-height:11px;color:#7e7e7e;font-weight:400;">Europe</div>
<div class="r" style="left:616px;top:100.1px;width:80.5px;height:13.6px;background:#1a6cb8"></div>
<div class="t" style="left:545.5px;top:119.19px;font-size:11px;line-height:11px;color:#7e7e7e;font-weight:400;">North Ame&hellip;</div>
<div class="r" style="left:616px;top:118.2px;width:74.8px;height:13.6px;background:#0062b1"></div>
<div class="r" style="left:470px;top:133.3px;width:146px;height:1px;background:#ebebeb"></div>
<div class="t" style="left:474px;top:137.29px;font-size:11px;line-height:11px;color:#7e7e7e;font-weight:400;">Consumer ...</div>
<div class="t" style="left:545.5px;top:137.29px;font-size:11px;line-height:11px;color:#7e7e7e;font-weight:400;">Asia Pacific</div>
<div class="r" style="left:616px;top:136.3px;width:117.8px;height:13.6px;background:#9cc4dc"></div>
<div class="t" style="left:545.5px;top:155.39px;font-size:11px;line-height:11px;color:#7e7e7e;font-weight:400;">Europe</div>
<div class="r" style="left:616px;top:154.4px;width:150.9px;height:13.6px;background:#b8d5e5"></div>
<div class="t" style="left:545.5px;top:173.49px;font-size:11px;line-height:11px;color:#7e7e7e;font-weight:400;">North Ame&hellip;</div>
<div class="r" style="left:616px;top:172.5px;width:191.6px;height:13.6px;background:#a9cbe0"></div>
<div class="r" style="left:470px;top:187.6px;width:146px;height:1px;background:#ebebeb"></div>
<div class="t" style="left:474px;top:191.59px;font-size:11px;line-height:11px;color:#7e7e7e;font-weight:400;">Consumer ...</div>
<div class="t" style="left:545.5px;top:191.59px;font-size:11px;line-height:11px;color:#7e7e7e;font-weight:400;">Asia Pacific</div>
<div class="r" style="left:616px;top:190.6px;width:63.3px;height:13.6px;background:#4d8fc8"></div>
<div class="t" style="left:545.5px;top:209.69px;font-size:11px;line-height:11px;color:#7e7e7e;font-weight:400;">Europe</div>
<div class="r" style="left:616px;top:208.7px;width:79.5px;height:13.6px;background:#a9cbe0"></div>
<div class="t" style="left:545.5px;top:227.79px;font-size:11px;line-height:11px;color:#7e7e7e;font-weight:400;">North Ame&hellip;</div>
<div class="r" style="left:616px;top:226.8px;width:203.7px;height:13.6px;background:#1f72bd"></div>
<div class="r" style="left:470px;top:241.9px;width:146px;height:1px;background:#ebebeb"></div>
<div class="t" style="left:474px;top:245.89px;font-size:11px;line-height:11px;color:#7e7e7e;font-weight:400;">Financials</div>
<div class="t" style="left:545.5px;top:245.89px;font-size:11px;line-height:11px;color:#7e7e7e;font-weight:400;">Asia Pacific</div>
<div class="r" style="left:616px;top:244.9px;width:160.8px;height:13.6px;background:#0062b1"></div>
<div class="t" style="left:545.5px;top:263.99px;font-size:11px;line-height:11px;color:#7e7e7e;font-weight:400;">Europe</div>
<div class="r" style="left:616px;top:263.0px;width:221.6px;height:13.6px;background:#0062b1"></div>
<div class="t" style="left:545.5px;top:282.09px;font-size:11px;line-height:11px;color:#7e7e7e;font-weight:400;">North Ame&hellip;</div>
<div class="r" style="left:616px;top:281.1px;width:247.7px;height:13.6px;background:#1f72bd"></div>
<div class="r" style="left:470px;top:296.2px;width:146px;height:1px;background:#ebebeb"></div>
<div class="t" style="left:474px;top:300.19px;font-size:11px;line-height:11px;color:#7e7e7e;font-weight:400;">Health Care</div>
<div class="t" style="left:545.5px;top:300.19px;font-size:11px;line-height:11px;color:#7e7e7e;font-weight:400;">Asia Pacific</div>
<div class="r" style="left:616px;top:299.2px;width:32.4px;height:13.6px;background:#f4a99a"></div>
<div class="t" style="left:545.5px;top:318.29px;font-size:11px;line-height:11px;color:#7e7e7e;font-weight:400;">Europe</div>
<div class="r" style="left:616px;top:317.3px;width:124.1px;height:13.6px;background:#a9cbe0"></div>
<div class="t" style="left:545.5px;top:336.39px;font-size:11px;line-height:11px;color:#7e7e7e;font-weight:400;">North Ame&hellip;</div>
<div class="r" style="left:616px;top:335.4px;width:264.3px;height:13.6px;background:#b8d5e5"></div>
<div class="r" style="left:470px;top:350.5px;width:146px;height:1px;background:#ebebeb"></div>
<div class="t" style="left:474px;top:354.49px;font-size:11px;line-height:11px;color:#7e7e7e;font-weight:400;">Industrials</div>
<div class="t" style="left:545.5px;top:354.49px;font-size:11px;line-height:11px;color:#7e7e7e;font-weight:400;">Asia Pacific</div>
<div class="r" style="left:616px;top:353.5px;width:102.2px;height:13.6px;background:#1f72bd"></div>
<div class="t" style="left:545.5px;top:372.59px;font-size:11px;line-height:11px;color:#7e7e7e;font-weight:400;">Europe</div>
<div class="r" style="left:616px;top:371.6px;width:109.5px;height:13.6px;background:#4d8fc8"></div>
<div class="t" style="left:545.5px;top:390.69px;font-size:11px;line-height:11px;color:#7e7e7e;font-weight:400;">North Ame&hellip;</div>
<div class="r" style="left:616px;top:389.7px;width:200.9px;height:13.6px;background:#4a8cc8"></div>
<div class="r" style="left:470px;top:404.8px;width:146px;height:1px;background:#ebebeb"></div>
<div class="t" style="left:474px;top:408.79px;font-size:11px;line-height:11px;color:#7e7e7e;font-weight:400;">Oil &amp; Gas</div>
<div class="t" style="left:545.5px;top:408.79px;font-size:11px;line-height:11px;color:#7e7e7e;font-weight:400;">Asia Pacific</div>
<div class="r" style="left:616px;top:407.8px;width:17.3px;height:13.6px;background:#0062b1"></div>
<div class="t" style="left:545.5px;top:426.89px;font-size:11px;line-height:11px;color:#7e7e7e;font-weight:400;">Europe</div>
<div class="r" style="left:616px;top:425.9px;width:127.6px;height:13.6px;background:#a9cbe0"></div>
<div class="t" style="left:545.5px;top:444.99px;font-size:11px;line-height:11px;color:#7e7e7e;font-weight:400;">North Ame&hellip;</div>
<div class="r" style="left:616px;top:444.0px;width:266.7px;height:13.6px;background:#d6e6ef"></div>
<div class="r" style="left:470px;top:459.1px;width:146px;height:1px;background:#ebebeb"></div>
<div class="t" style="left:474px;top:463.09px;font-size:11px;line-height:11px;color:#7e7e7e;font-weight:400;">Technology</div>
<div class="t" style="left:545.5px;top:463.09px;font-size:11px;line-height:11px;color:#7e7e7e;font-weight:400;">Asia Pacific</div>
<div class="r" style="left:616px;top:462.1px;width:27px;height:13.6px;background:#0062b1"></div>
<div class="t" style="left:545.5px;top:481.19px;font-size:11px;line-height:11px;color:#7e7e7e;font-weight:400;">Europe</div>
<div class="r" style="left:616px;top:480.2px;width:37.2px;height:13.6px;background:#1a6cb8"></div>
<div class="t" style="left:545.5px;top:499.29px;font-size:11px;line-height:11px;color:#7e7e7e;font-weight:400;">North Ame&hellip;</div>
<div class="r" style="left:616px;top:498.3px;width:296.4px;height:13.6px;background:#0062b1"></div>
<div class="r" style="left:616.5px;top:516px;width:33.2px;height:3.5px;background:#f4b5a8"></div>
<div class="r" style="left:616px;top:520px;width:298.5px;height:1px;background:#dadada"></div>
<div class="r" style="left:739.5px;top:521px;width:1px;height:3px;background:#ccc"></div>
<div class="r" style="left:862.5px;top:521px;width:1px;height:3px;background:#ccc"></div>
<div class="t" style="left:617.5px;top:523.94px;font-size:10.7px;line-height:10.7px;color:#888;font-weight:400;">0</div>
<div class="t" style="left:724.9px;top:523.94px;font-size:10.7px;line-height:10.7px;color:#888;font-weight:400;">500 B</div>
<div class="t" style="left:845.2px;top:523.94px;font-size:10.7px;line-height:10.7px;color:#888;font-weight:400;">1000 B</div>
<div class="t" style="left:738px;top:541.64px;font-size:10.7px;line-height:10.7px;color:#777;font-weight:400;">Mcap(USD)</div>
<div class="r" style="left:914.4px;top:80px;width:5.6px;height:437.6px;background:#f1f1f1;border-radius:2.8px"></div>
<div class="r" style="left:914.4px;top:80px;width:5.6px;height:352px;background:#d0d0d0;border-radius:2.8px"></div>
<svg class="r" style="left:465px;top:44px;" width="17" height="17" viewBox="0 0 17 17"><path d="M2.6 14.5V2.6H14.8" fill="none" stroke="#50d2da" stroke-width="3.3" stroke-linecap="round" stroke-linejoin="round"/></svg>
<svg class="r" style="left:908px;top:44px;" width="18" height="17" viewBox="0 0 18 17"><path d="M3.5 2.6H14.8V14.5" fill="none" stroke="#50d2da" stroke-width="3.3" stroke-linecap="round" stroke-linejoin="round"/></svg>
<svg class="r" style="left:464.3px;top:545.8px;" width="17" height="17" viewBox="0 0 17 17"><path d="M3.5 2.5V13.2H14.5" fill="none" stroke="#50d2da" stroke-width="3.3" stroke-linecap="round" stroke-linejoin="round"/></svg>
<svg class="r" style="left:908px;top:545px;" width="18" height="17" viewBox="0 0 18 17"><path d="M4 13.5H14.5V2.8" fill="none" stroke="#50d2da" stroke-width="3.3" stroke-linecap="round" stroke-linejoin="round"/></svg>
<div class="r" style="left:673.4px;top:43px;width:43px;height:3.8px;background:#50d2da;border-radius:2px"></div>
<div class="r" style="left:682.2px;top:44.5px;width:27px;height:18.5px;background:rgba(82,208,216,0.85);border-radius:5px"></div>
<div class="r" style="left:687.7px;top:50.8px;width:15.7px;height:1.6px;background:#fff"></div>
<div class="r" style="left:687.7px;top:55.9px;width:15.7px;height:1.6px;background:#fff"></div>
<div class="r" style="left:466.3px;top:281.2px;width:3.6px;height:43px;background:#50d2da;border-radius:2px"></div>
<div class="r" style="left:921px;top:281.2px;width:3.7px;height:43px;background:#50d2da;border-radius:2px"></div>
<div class="r" style="left:673.6px;top:557px;width:42.8px;height:3.5px;background:#50d2da;border-radius:2px"></div>
<div class="r" style="left:471px;top:292.8px;width:20px;height:20px;background:#fff;border:1px solid #d2d2d2;border-radius:50%;box-sizing:border-box"></div>
<svg class="r" style="left:471px;top:292.8px;" width="20" height="20" viewBox="0 0 20 20"><path d="M10 5.5v9" stroke="#777" stroke-width="1.1"/><path d="M5.6 10L8.3 7.8v4.4zM14.4 10l-2.7-2.2v4.4z" fill="#777"/></svg>
<div class="r" style="left:899px;top:293px;width:20px;height:20px;background:#fff;border:1px solid #d2d2d2;border-radius:50%;box-sizing:border-box"></div>
<svg class="r" style="left:899px;top:293px;" width="20" height="20" viewBox="0 0 20 20"><path d="M10 5.5v9" stroke="#777" stroke-width="1.1"/><path d="M5.6 10L8.3 7.8v4.4zM14.4 10l-2.7-2.2v4.4z" fill="#777"/></svg>
<div class="r" style="left:685.5px;top:535.4px;width:20px;height:20px;background:#fff;border:1px solid #d2d2d2;border-radius:50%;box-sizing:border-box"></div>
<svg class="r" style="left:685.5px;top:535.4px;" width="20" height="20" viewBox="0 0 20 20"><path d="M5 10h10" stroke="#777" stroke-width="1"/><path d="M10 4.8l-2.6 3h5.2zM10 15.2l-2.6-3h5.2z" fill="#777"/></svg>
<div class="r" style="left:674px;top:68px;width:20px;height:20px;background:#fff;border:1px solid #d2d2d2;border-radius:50%;box-sizing:border-box"></div>
<svg class="r" style="left:674px;top:68px;" width="20" height="20" viewBox="0 0 20 20"><path d="M5 10h10" stroke="#777" stroke-width="1"/><path d="M10 4.8l-2.6 3h5.2zM10 15.2l-2.6-3h5.2z" fill="#777"/></svg>
<div class="r" style="left:696.5px;top:68px;width:20px;height:20px;background:#fff;border:1px solid #d2d2d2;border-radius:50%;box-sizing:border-box"></div>
<svg class="r" style="left:696.5px;top:68px;" width="20" height="20" viewBox="0 0 20 20"><path d="M5.5 8.5v-3h3M11.5 5.5h3v3M14.5 11.5v3h-3M8.5 14.5h-3v-3" fill="none" stroke="#777" stroke-width="1.2"/></svg>
</body></html>
